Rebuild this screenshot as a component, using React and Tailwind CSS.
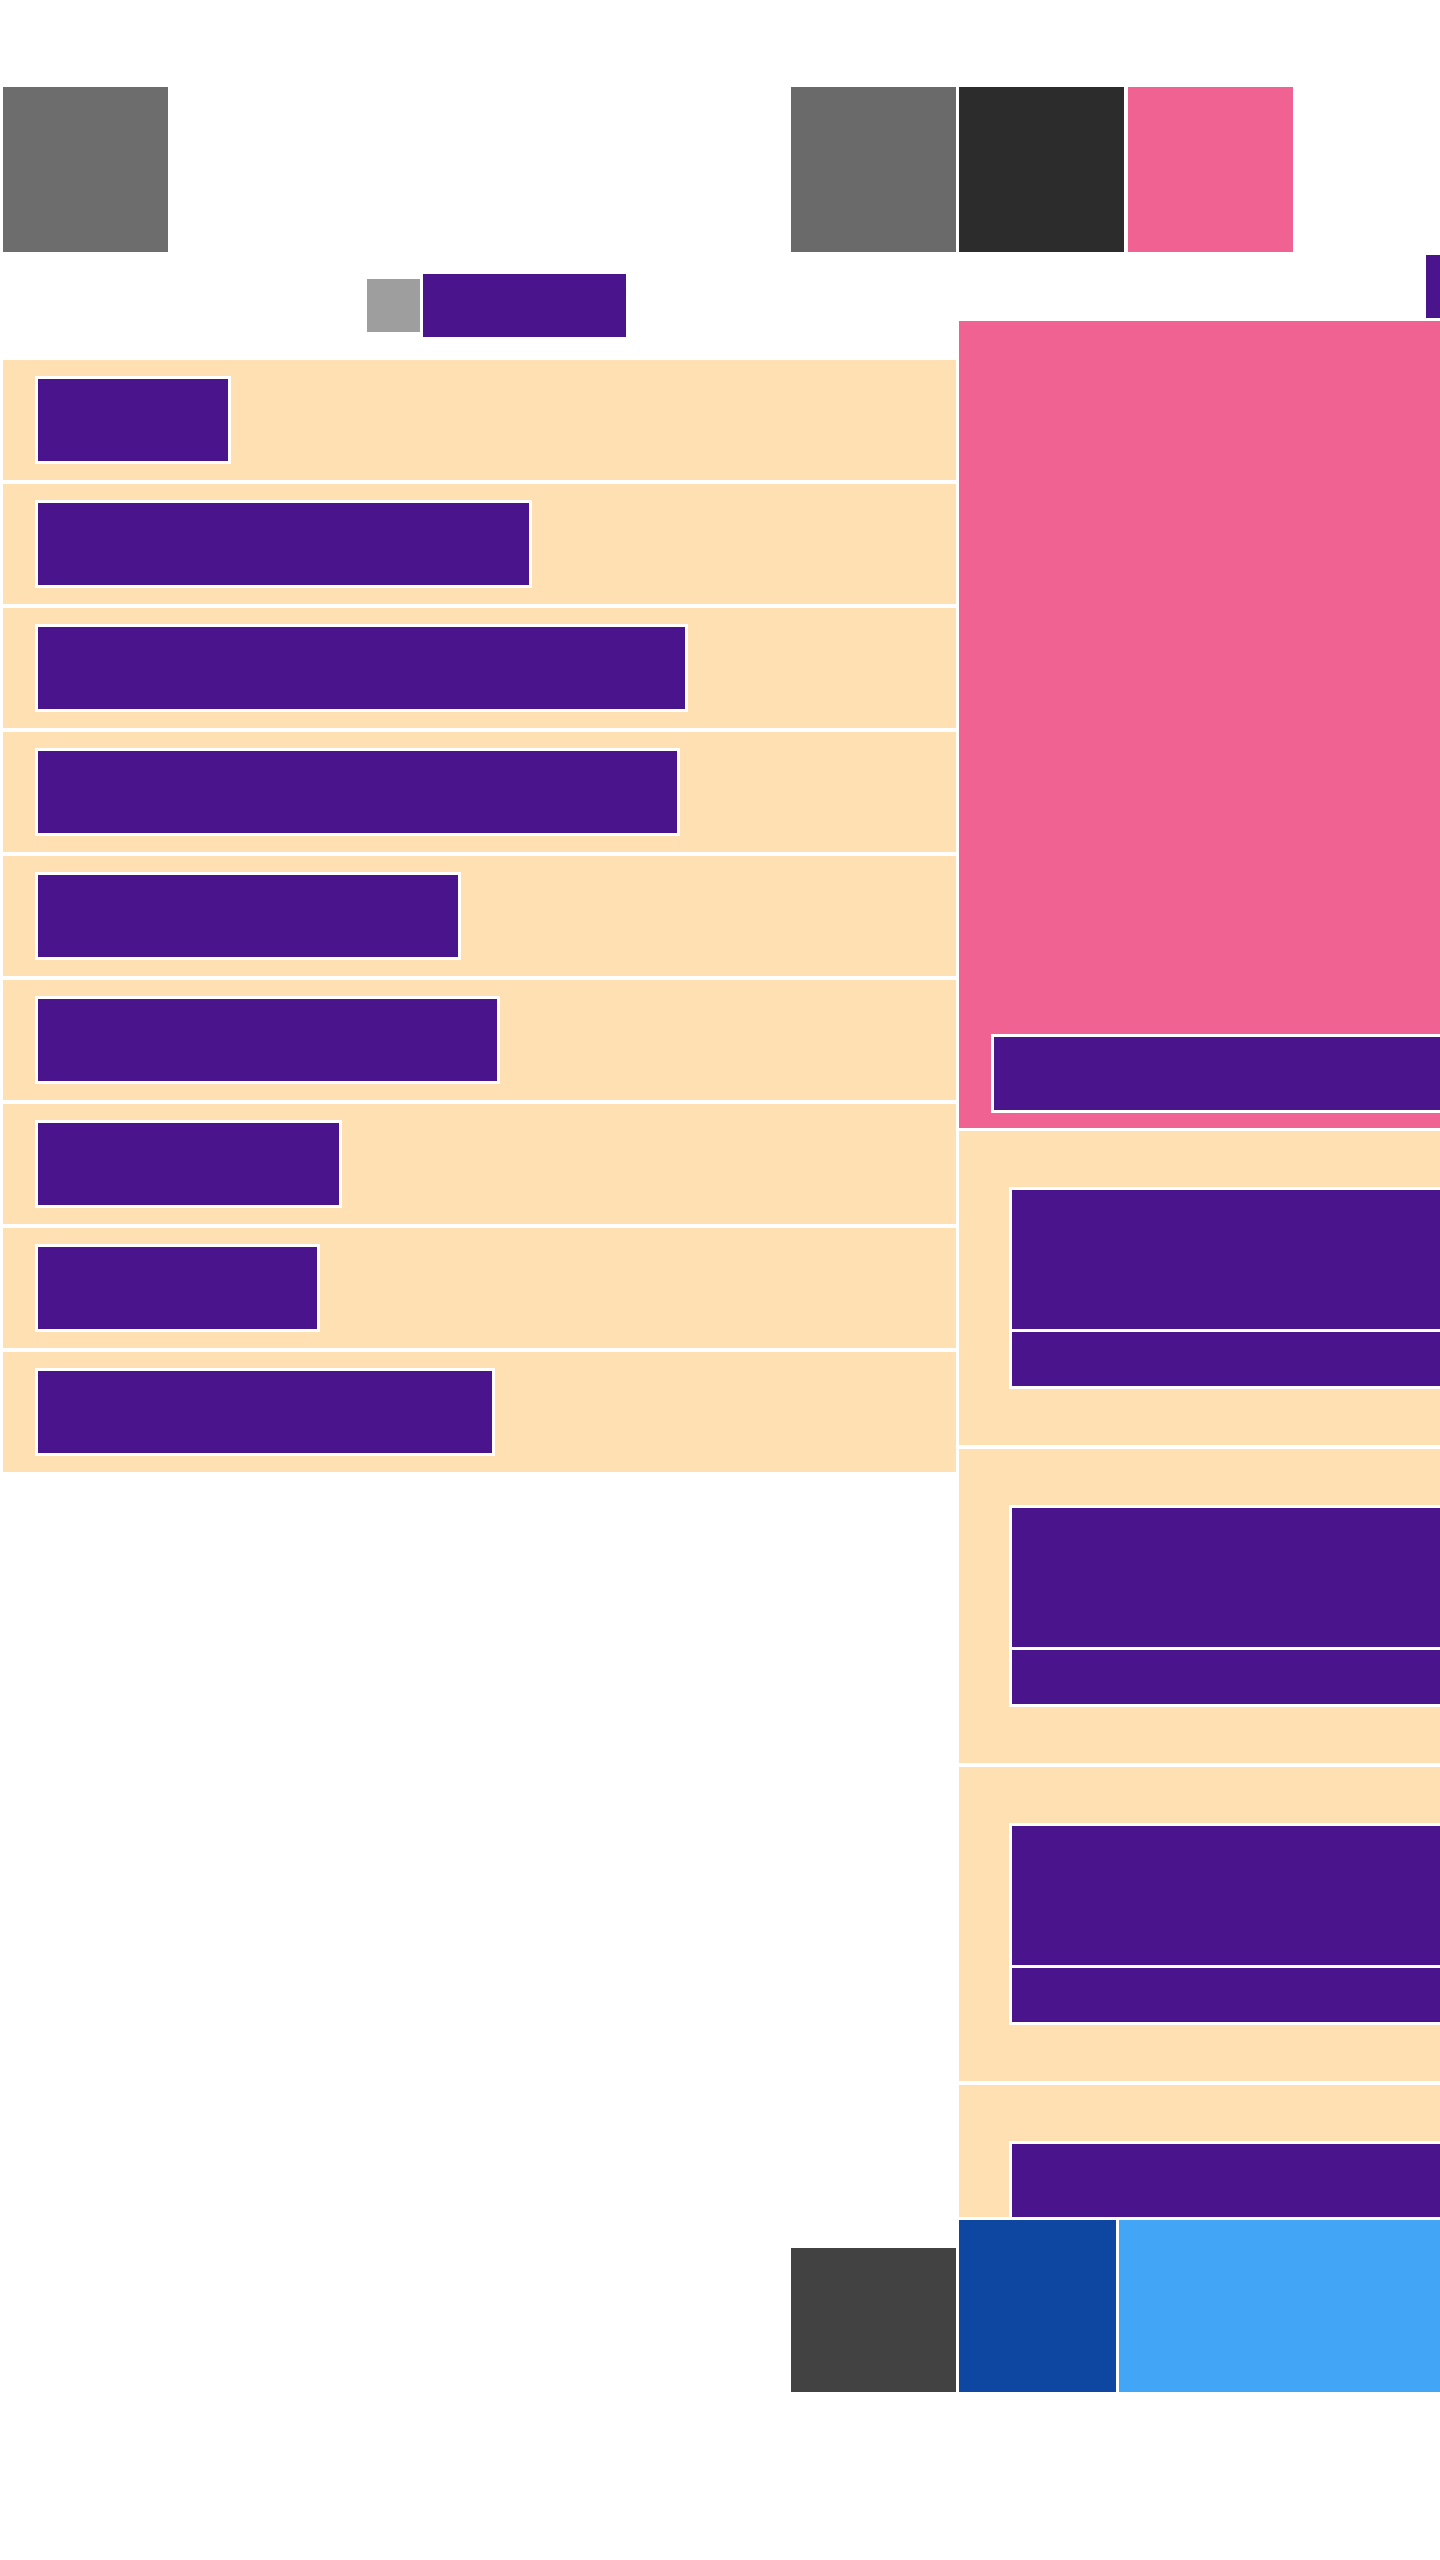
import React from "react";

const rowWidths = [196, 497, 653, 645, 426, 465, 307, 285, 460];

function ListRow({ width }) {
  return (
    <div className="h-[120px] bg-[#ffe0b2] pl-[32px] pt-[16px]">
      <div className="h-[88px] border-[3px] border-white bg-[#4a148c]" style={{ width }} />
    </div>
  );
}

function DetailCard() {
  return (
    <div className="h-[314px] shrink-0 bg-[#ffe0b2] pl-[50px] pt-[56px]">
      <div className="flex w-[560px] flex-col gap-[3px] border-[3px] border-white bg-white">
        <div className="h-[139px] bg-[#4a148c]" />
        <div className="h-[54px] bg-[#4a148c]" />
      </div>
    </div>
  );
}

export default function App() {
  return (
    <div className="min-h-[2560px] w-[1440px] overflow-hidden bg-white pt-[87px]">
      {/* top tiles */}
      <div className="flex h-[165px]">
        <div className="ml-[3px] w-[165px] shrink-0 bg-[#6d6d6d]" />
        <div className="ml-[623px] w-[165px] shrink-0 bg-[#6a6a6a]" />
        <div className="ml-[3px] w-[165px] shrink-0 bg-[#2c2c2c]" />
        <div className="ml-[4px] w-[165px] shrink-0 bg-[#f06292]" />
      </div>

      <div className="mt-[3px] flex items-start">
        {/* left column */}
        <div className="ml-[3px] w-[953px] shrink-0">
          <div className="flex h-[105px] items-center pb-[4px]">
            <div className="ml-[364px] h-[53px] w-[53px] bg-[#9e9e9e]" />
            <div className="ml-[3px] h-[63px] w-[203px] bg-[#4a148c]" />
          </div>
          <div className="flex flex-col gap-[4px]">
            {rowWidths.map((w, i) => (
              <ListRow key={i} width={w} />
            ))}
          </div>
        </div>

        {/* right column */}
        <div className="ml-[3px] flex h-[1962px] w-[600px] shrink-0 flex-col overflow-hidden">
          <div className="ml-[467px] h-[63px] w-[40px] shrink-0 bg-[#4a148c]" />
          <div className="mt-[3px] flex h-[807px] shrink-0 flex-col justify-end bg-[#f06292] pb-[15px] pl-[32px]">
            <div className="h-[79px] w-[560px] border-[3px] border-white bg-[#4a148c]" />
          </div>
          <div className="mt-[3px] flex flex-col gap-[4px]">
            <DetailCard />
            <DetailCard />
            <DetailCard />
            <DetailCard />
          </div>
        </div>
      </div>

      {/* bottom tiles */}
      <div className="mt-[3px] flex h-[172px] items-end">
        <div className="ml-[791px] h-[144px] w-[165px] shrink-0 bg-[#424242]" />
        <div className="ml-[3px] h-full w-[157px] shrink-0 bg-[#0d47a1]" />
        <div className="ml-[3px] h-full w-[400px] shrink-0 bg-[#42a5f5]" />
      </div>
    </div>
  );
}
